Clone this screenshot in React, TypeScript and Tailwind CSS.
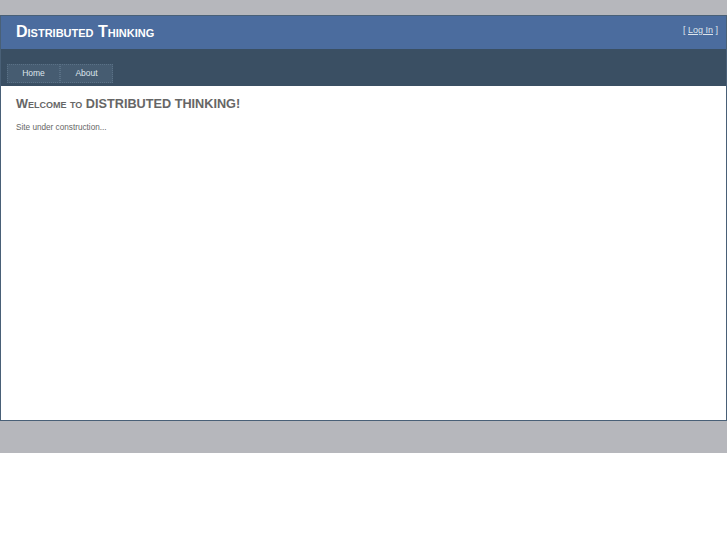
const menu = ['Home', 'About']

export default function App() {
  return (
    <div className="bg-[#b6b7bc] pt-[15px] font-['Liberation_Sans',Arial,sans-serif]">
      <div className="border border-[#496077] bg-white">
        <div className="flex h-[33px] items-start justify-between bg-[#4b6c9e]">
          <h1 className="pl-[15px] pt-[7px] text-[16px] font-bold leading-[18px] text-white [font-variant-caps:small-caps]">
            Distributed Thinking
          </h1>
          <div className="pr-2 pt-[8px] text-[9px] leading-[12px] text-[#dde4ec]">
            [ <a className="underline">Log In</a> ]
          </div>
        </div>
        <div className="h-[37px] bg-[#3a4f63] pl-[6px] pt-[15px]">
          <ul className="flex">
            {menu.map((item) => (
              <li
                key={item}
                className="flex h-[19px] w-[53px] items-center justify-center border border-dotted border-[#5a7186] bg-[#465c71] text-[8.5px] text-[#dde4ec]"
              >
                {item}
              </li>
            ))}
          </ul>
        </div>
        <div className="h-[334px] pl-[15px] pt-[10px]">
          <h2 className="text-[12.7px] font-bold leading-[16px] text-[#666] [font-variant-caps:small-caps]">
            Welcome to DISTRIBUTED THINKING!
          </h2>
          <p className="mt-[11px] text-[8.2px] leading-[10px] text-[#666]">
            Site under construction...
          </p>
        </div>
      </div>
      <div className="h-[32px]" />
    </div>
  )
}
